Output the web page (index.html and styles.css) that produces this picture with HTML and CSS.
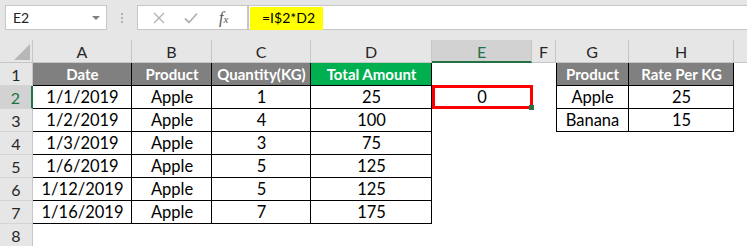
FILE: index.html
```html
<!DOCTYPE html>
<html lang="en">
<head>
    <meta charset="UTF-8">
    <title>Excel - Mixed Reference</title>
    <link rel="stylesheet" href="styles.css">
</head>
<body>
    <div class="toolbar">
        <div class="namebox">
            <span>E2</span>
            <span class="caret"></span>
        </div>
        <div class="dots"><i></i><i></i><i></i></div>
        <div class="fbtns">
            <svg class="ico" width="14" height="14" viewBox="0 0 14 14">
                <path d="M2 2 L12 12 M12 2 L2 12" stroke="#b3b3b3" stroke-width="1.4" fill="none"/>
            </svg>
            <svg class="ico" width="16" height="14" viewBox="0 0 16 14">
                <path d="M2 7.5 L6 11.5 L14 2.5" stroke="#b3b3b3" stroke-width="1.8" fill="none"/>
            </svg>
            <span class="fx">f<sub>x</sub></span>
        </div>
        <div class="finput">
            <span class="formula">=I$2*D2</span>
        </div>
    </div>

    <div class="sheet">
        <!-- column headers -->
        <div class="corner">
            <svg width="33" height="23" viewBox="0 0 33 23"><polygon points="14,20 30,20 30,4" fill="#b7b7b7"/></svg>
        </div>
        <div class="ch">A</div>
        <div class="ch">B</div>
        <div class="ch">C</div>
        <div class="ch">D</div>
        <div class="ch sel">E</div>
        <div class="ch">F</div>
        <div class="ch">G</div>
        <div class="ch">H</div>
        <div class="ch last"></div>

        <!-- row 1 -->
        <div class="rh">1</div>
        <div class="c t hd">Date</div>
        <div class="c t hd">Product</div>
        <div class="c t hd">Quantity(KG)</div>
        <div class="c t gr">Total Amount</div>
        <div class="c"></div>
        <div class="c"></div>
        <div class="c t hd l">Product</div>
        <div class="c t hd">Rate Per KG</div>
        <div class="c"></div>

        <!-- row 2 -->
        <div class="rh sel">2</div>
        <div class="c t">1/1/2019</div>
        <div class="c t">Apple</div>
        <div class="c t">1</div>
        <div class="c t">25</div>
        <div class="c active">0</div>
        <div class="c"></div>
        <div class="c t l">Apple</div>
        <div class="c t">25</div>
        <div class="c"></div>

        <!-- row 3 -->
        <div class="rh">3</div>
        <div class="c t">1/2/2019</div>
        <div class="c t">Apple</div>
        <div class="c t">4</div>
        <div class="c t">100</div>
        <div class="c"></div>
        <div class="c"></div>
        <div class="c t l">Banana</div>
        <div class="c t">15</div>
        <div class="c"></div>

        <!-- row 4 -->
        <div class="rh">4</div>
        <div class="c t">1/3/2019</div>
        <div class="c t">Apple</div>
        <div class="c t">3</div>
        <div class="c t">75</div>
        <div class="c"></div>
        <div class="c"></div>
        <div class="c"></div>
        <div class="c"></div>
        <div class="c"></div>

        <!-- row 5 -->
        <div class="rh">5</div>
        <div class="c t">1/6/2019</div>
        <div class="c t">Apple</div>
        <div class="c t">5</div>
        <div class="c t">125</div>
        <div class="c"></div>
        <div class="c"></div>
        <div class="c"></div>
        <div class="c"></div>
        <div class="c"></div>

        <!-- row 6 -->
        <div class="rh">6</div>
        <div class="c t">1/12/2019</div>
        <div class="c t">Apple</div>
        <div class="c t">5</div>
        <div class="c t">125</div>
        <div class="c"></div>
        <div class="c"></div>
        <div class="c"></div>
        <div class="c"></div>
        <div class="c"></div>

        <!-- row 7 -->
        <div class="rh">7</div>
        <div class="c t">1/16/2019</div>
        <div class="c t">Apple</div>
        <div class="c t">7</div>
        <div class="c t">175</div>
        <div class="c"></div>
        <div class="c"></div>
        <div class="c"></div>
        <div class="c"></div>
        <div class="c"></div>

        <!-- row 8 -->
        <div class="rh">8</div>
        <div class="c"></div>
        <div class="c"></div>
        <div class="c"></div>
        <div class="c"></div>
        <div class="c"></div>
        <div class="c"></div>
        <div class="c"></div>
        <div class="c"></div>
        <div class="c"></div>
    </div>
</body>
</html>
```

FILE: styles.css
```css
* {
    box-sizing: border-box;
}
body {
    margin: 0;
    width: 747px;
    height: 246px;
    overflow: hidden;
    background: #fff;
    font-family: Lato, "Open Sans", sans-serif;
    color: #000;
}
.toolbar {
    height: 40px;
    background: #e6e6e6;
    display: flex;
    align-items: flex-start;
    padding: 5px 0 0 5px;
}
.namebox {
    width: 102px;
    height: 25px;
    background: #fff;
    border: 1px solid #c6c6c6;
    display: flex;
    align-items: center;
    justify-content: space-between;
    padding: 0 6px 0 7px;
    font-size: 14px;
    color: #222;
}
.caret {
    width: 0;
    height: 0;
    border-left: 4px solid transparent;
    border-right: 4px solid transparent;
    border-top: 4px solid #808080;
}
.dots {
    width: 30px;
    height: 25px;
    display: flex;
    flex-direction: column;
    align-items: center;
    justify-content: center;
    gap: 2px;
}
.dots i {
    display: block;
    width: 2px;
    height: 2px;
    background: #b0b0b0;
}
.fbtns {
    width: 111px;
    height: 25px;
    background: #fff;
    border: 1px solid #c6c6c6;
    display: flex;
    align-items: center;
    padding-left: 14px;
    gap: 17px;
}
.fx {
    font-family: "Liberation Serif", serif;
    font-style: italic;
    font-size: 16px;
    color: #555;
    margin-left: 3px;
}
.fx sub {
    font-size: 11px;
    vertical-align: 0;
}
.finput {
    flex: 1;
    height: 25px;
    background: #fff;
    border: 1px solid #c6c6c6;
    border-right: none;
    padding: 1px 0 0 1px;
}
.formula {
    display: block;
    width: 73px;
    height: 23px;
    background: #ffff00;
    padding-left: 12px;
    line-height: 22px;
    font-size: 14px;
}
.sheet {
    display: grid;
    grid-template-columns: 33px 99px 80px 99px 121px 100px 24px 73px 105px 1fr;
    grid-auto-rows: 23px;
}
.corner {
    background: #e6e6e6;
    border-right: 1px solid #c6c6c6;
    border-bottom: 1px solid #c6c6c6;
}
.corner svg {
    display: block;
}
.ch {
    background: #e6e6e6;
    border-right: 1px solid #c6c6c6;
    border-bottom: 1px solid #c6c6c6;
    text-align: center;
    line-height: 23px;
    font-size: 16px;
    color: #262626;
}
.ch.last {
    border-right: none;
}
.ch.sel {
    background: #d2d2d2;
    color: #217346;
    border-bottom: 2px solid #217346;
}
.rh {
    background: #e6e6e6;
    border-right: 1px solid #c6c6c6;
    border-bottom: 1px solid #d4d4d4;
    text-align: center;
    line-height: 23px;
    font-size: 16px;
    color: #262626;
}
.rh.sel {
    background: #d2d2d2;
    color: #217346;
    border-right: 2px solid #217346;
}
.c {
    background: #fff;
    text-align: center;
    line-height: 23px;
    font-size: 16.5px;
    white-space: nowrap;
}
.t {
    box-shadow: inset -1px -1px 0 #000;
}
.t.l {
    box-shadow: inset -1px -1px 0 #000, inset 1px 0 0 #000;
}
.hd {
    background: #808080;
    color: #fff;
    font-weight: bold;
    font-size: 15px;
}
.gr {
    background: #00b050;
    color: #fff;
    font-weight: bold;
    font-size: 15px;
}
.active {
    position: relative;
}
.active::after {
    content: "";
    position: absolute;
    top: -1px;
    left: 0;
    right: -1px;
    bottom: 0;
    border: 3px solid #ff0000;
}
.active::before {
    content: "";
    position: absolute;
    right: -2px;
    bottom: -1px;
    width: 5px;
    height: 5px;
    background: #217346;
    z-index: 1;
}
```
